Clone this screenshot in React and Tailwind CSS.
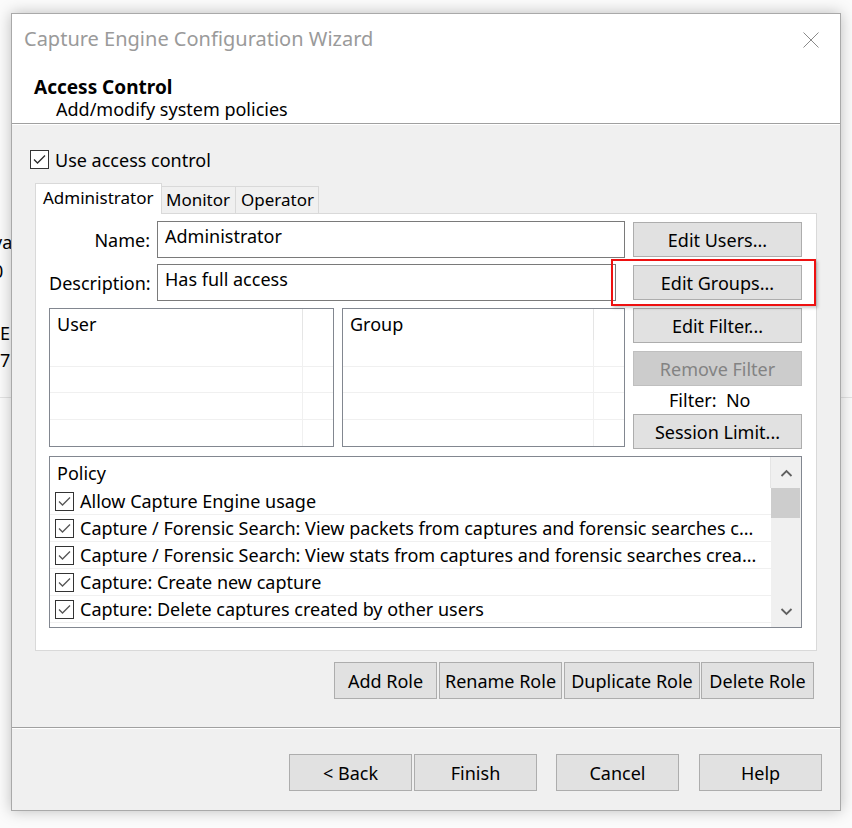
import React from "react";

function CheckBox({ color = "#2b2b2b" }) {
  return (
    <div className="w-[19px] h-[19px] border border-[#333333] bg-white flex items-center justify-center shrink-0">
      <svg width="17" height="17" viewBox="0 0 17 17">
        <polyline points="3,8.5 6.5,12 14,4.5" fill="none" stroke={color} strokeWidth="1.3" />
      </svg>
    </div>
  );
}

function Btn({ children, className = "", disabled }) {
  return (
    <div
      className={`flex items-center justify-center border leading-none shrink-0 ${
        disabled ? "bg-[#cccccc] border-[#bfbfbf] text-[#838383]" : "bg-[#e1e1e1] border-[#adadad] text-black"
      } ${className}`}
    >
      {children}
    </div>
  );
}

function GridList({ title, className }) {
  return (
    <div className={`h-[139px] border border-[#828790] bg-white flex flex-col ${className}`}>
      <div className="h-[31px] flex shrink-0">
        <div className="flex-1 pl-[7px] pt-[6px] leading-none">{title}</div>
        <div className="w-[31px] border-l border-[#e5e5e5]" />
      </div>
      {[0, 1, 2, 3].map((i) => (
        <div key={i} className={`h-[26.5px] flex ${i < 3 ? "border-b border-[#f0f0f0]" : ""}`}>
          <div className="flex-1" />
          <div className="w-[31px] border-l border-[#f0f0f0]" />
        </div>
      ))}
    </div>
  );
}

function Chevron({ up }) {
  return (
    <svg width="13" height="8" viewBox="0 0 13 8">
      <polyline
        points={up ? "1.5,7 6.5,2 11.5,7" : "1.5,1 6.5,6 11.5,1"}
        fill="none"
        stroke="#606060"
        strokeWidth="1.8"
      />
    </svg>
  );
}

const policies = [
  "Allow Capture Engine usage",
  "Capture / Forensic Search: View packets from captures and forensic searches c...",
  "Capture / Forensic Search: View stats from captures and forensic searches crea...",
  "Capture: Create new capture",
  "Capture: Delete captures created by other users",
];

export default function App() {
  return (
    <div className="relative w-[852px] h-[828px] overflow-hidden bg-[#fbfbfb] font-['Noto_Sans',sans-serif] text-[18px] text-black">
      {/* window behind the dialog */}
      <div className="absolute left-0 top-[397px] w-full h-px bg-[#e3e3e3]" />
      <span className="absolute left-[-7px] top-[232px] leading-[20px]">va</span>
      <span className="absolute left-[-7px] top-[261px] leading-[20px]">0</span>
      <span className="absolute left-0 top-[323px] leading-[20px]">E</span>
      <span className="absolute left-0 top-[350px] leading-[20px]">7</span>

      {/* dialog */}
      <div className="absolute left-[11px] top-[13px] w-[830px] h-[798px] border border-[#a9a9a9] bg-[#f0f0f0] shadow-[0_0_14px_rgba(0,0,0,0.25)] flex flex-col">
        <div className="relative h-[109px] bg-white shrink-0">
          <div className="pl-[12px] pt-[15px] text-[20px] leading-none text-[#9a9a9a]">
            Capture Engine Configuration Wizard
          </div>
          <svg className="absolute left-[791px] top-[18px]" width="16" height="16" viewBox="0 0 16 16">
            <path d="M0.5 0.5 L15.5 15.5 M15.5 0.5 L0.5 15.5" stroke="#8a8a8a" strokeWidth="1" fill="none" />
          </svg>
          <div className="pl-[22px] mt-[29px] text-[19px] font-bold leading-none">Access Control</div>
          <div className="pl-[44px] mt-[3px] leading-none">Add/modify system policies</div>
        </div>
        <div className="h-px bg-[#a0a0a0] shrink-0" />
        <div className="h-px bg-white shrink-0" />

        {/* body */}
        <div className="h-[602px] shrink-0 flex flex-col pt-[25px]">
          <div className="flex items-center pl-[18px] gap-[6px] h-[19px]">
            <CheckBox />
            <span className="leading-none">Use access control</span>
          </div>

          {/* tabs */}
          <div className="flex items-end ml-[23px] mt-[14px] h-[30px] text-[17px]">
            <div className="relative z-10 h-[31px] -mb-px w-[127px] bg-white border border-b-0 border-[#d9d9d9] pl-[7px] pt-[5px] leading-none">
              Administrator
            </div>
            <div className="h-[27px] w-[75px] -ml-px border border-b-0 border-[#d9d9d9] bg-[#f0f0f0] pl-[4px] pt-[4px] leading-none">
              Monitor
            </div>
            <div className="h-[27px] w-[84px] -ml-px border border-b-0 border-[#d9d9d9] bg-[#f0f0f0] pl-[5px] pt-[4px] leading-none">
              Operator
            </div>
          </div>

          <div className="w-[782px] h-[438px] ml-[23px] border border-[#d9d9d9] bg-white pl-[13px] pr-[14px] pt-[7px] flex flex-col">
            <div className="flex gap-[8px]">
              <div className="w-[576px] flex flex-col">
                <div className="flex items-center h-[37px] gap-[7px]">
                  <div className="w-[101px] text-right leading-none">Name:</div>
                  <div className="w-[468px] h-[37px] border border-[#7a7a7a] pl-[7px] pt-[5px] leading-none">Administrator</div>
                </div>
                <div className="flex items-center h-[37px] gap-[7px] mt-[6px]">
                  <div className="w-[101px] text-right leading-none whitespace-nowrap">Description:</div>
                  <div className="w-[459px] h-[37px] border border-[#7a7a7a] pl-[7px] pt-[5px] leading-none">Has full access</div>
                </div>
                <div className="flex gap-[8px] mt-[7px]">
                  <GridList title="User" className="w-[285px]" />
                  <GridList title="Group" className="w-[283px]" />
                </div>
              </div>
              <div className="w-[169px] flex flex-col pt-px">
                <Btn className="h-[35px]">Edit Users...</Btn>
                <Btn className="h-[35px] mt-[8px]">Edit Groups...</Btn>
                <Btn className="h-[35px] mt-[8px]">Edit Filter...</Btn>
                <Btn className="h-[35px] mt-[8px]" disabled>Remove Filter</Btn>
                <div className="h-[28px] flex items-center pl-[36px] leading-none">Filter:&nbsp;&nbsp;No</div>
                <Btn className="h-[35px]">Session Limit...</Btn>
              </div>
            </div>

            {/* policy list */}
            <div className="w-[753px] h-[172px] mt-[7px] border border-[#828790] bg-white flex">
              <div className="flex-1 flex flex-col min-w-0">
                <div className="h-[31px] flex shrink-0">
                  <div className="flex-1 pl-[7px] pt-[7px] leading-none">Policy</div>
                  <div className="w-px bg-[#e5e5e5]" />
                </div>
                {policies.map((p) => (
                  <div key={p} className="h-[27px] flex items-center pl-[5px] gap-[6px] border-b border-[#f0f0f0] shrink-0">
                    <CheckBox color="#555555" />
                    <span className="whitespace-nowrap leading-[20px]">{p}</span>
                  </div>
                ))}
              </div>
              <div className="w-[30px] bg-[#f0f0f0] flex flex-col shrink-0">
                <div className="h-[31px] flex items-center justify-center">
                  <Chevron up />
                </div>
                <div className="h-[30px] bg-[#cdcdcd] mr-px" />
                <div className="flex-1" />
                <div className="h-[31px] flex items-center justify-center">
                  <Chevron />
                </div>
              </div>
            </div>
          </div>

          {/* role buttons */}
          <div className="flex justify-end mt-[11px] mr-[26px]">
            <Btn className="h-[37px] w-[103px]">Add Role</Btn>
            <Btn className="h-[37px] w-[123px] ml-[2px]">Rename Role</Btn>
            <Btn className="h-[37px] w-[136px] ml-[2px]">Duplicate Role</Btn>
            <Btn className="h-[37px] w-[113px] ml-px">Delete Role</Btn>
          </div>
        </div>

        <div className="h-px bg-[#a0a0a0] shrink-0" />
        <div className="h-px bg-white shrink-0" />

        {/* footer */}
        <div className="flex-1 flex justify-end items-start pt-[25px] pr-[18px]">
          <Btn className="h-[37px] w-[123px]">&lt; Back</Btn>
          <Btn className="h-[37px] w-[123px] ml-[2px]">Finish</Btn>
          <Btn className="h-[37px] w-[123px] ml-[19px]">Cancel</Btn>
          <Btn className="h-[37px] w-[123px] ml-[20px]">Help</Btn>
        </div>

        {/* annotation */}
        <div className="absolute left-[599px] top-[245px] w-[205px] h-[47px] border-2 border-[#ee1111] shadow-[2px_2px_3px_rgba(0,0,0,0.2)]" />
      </div>
    </div>
  );
}
